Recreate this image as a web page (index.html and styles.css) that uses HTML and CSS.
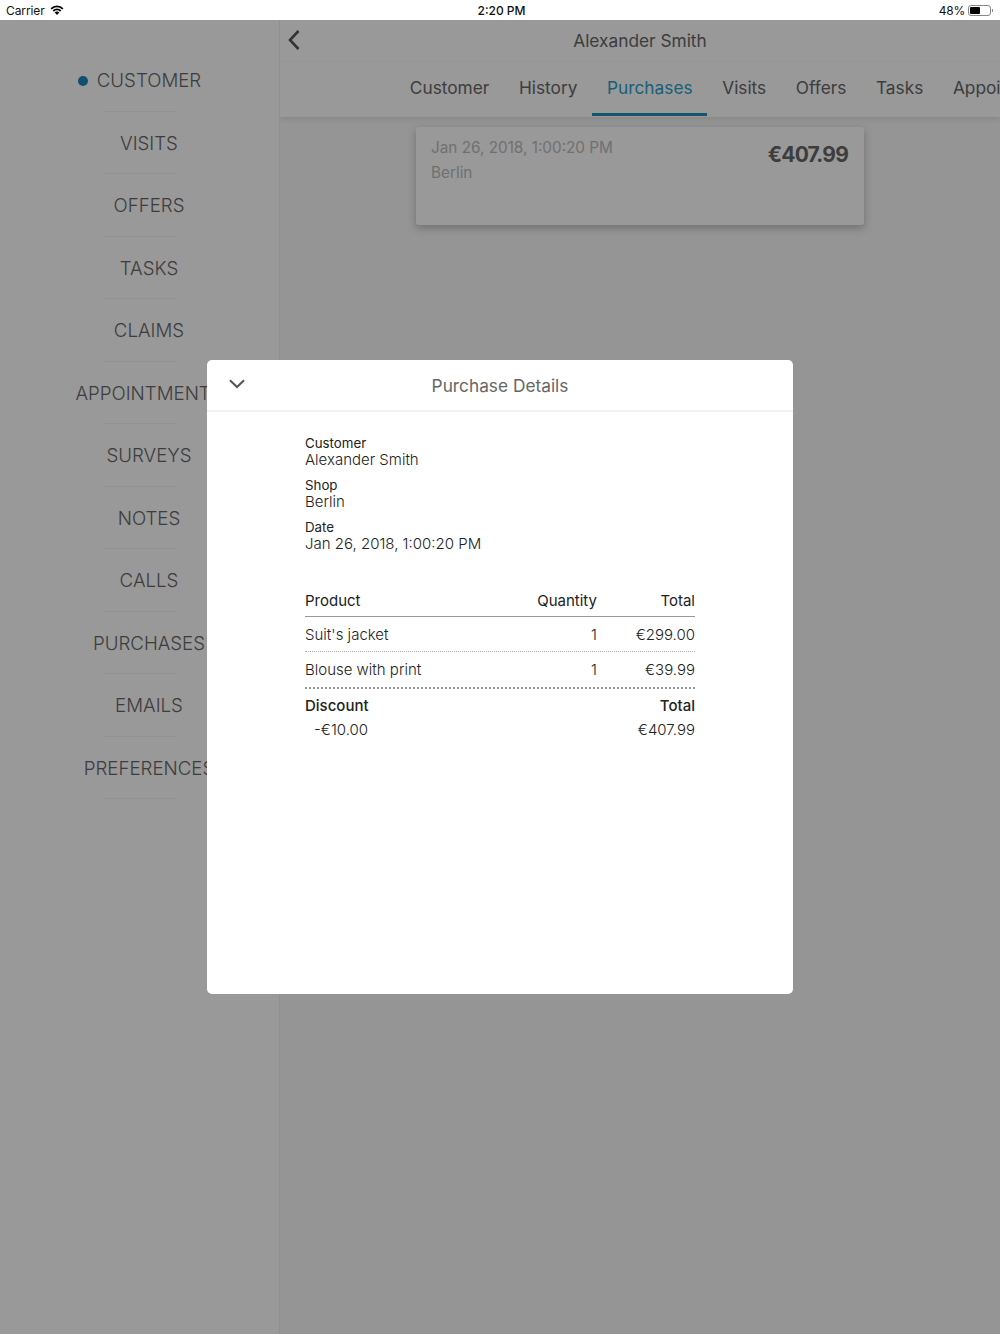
FILE: index.html
```html
<!DOCTYPE html>
<html lang="en">
<head>
<meta charset="utf-8">
<title>Purchase Details</title>
<link rel="stylesheet" href="styles.css">
</head>
<body>
<header class="status">
  <div class="status-left">
    <span>Carrier</span>
    <svg class="wifi" width="14" height="10" viewBox="0 0 14 10"><path d="M7 10 4.700 7.500a3.300 3.300 0 0 1 4.600 0Z" fill="#000"/><path d="M3.300 6a5.300 5.300 0 0 1 7.400 0M1.200 3.800a8.300 8.300 0 0 1 11.600 0" fill="none" stroke="#000" stroke-width="1.800"/></svg>
  </div>
  <div class="status-time">2:20 PM</div>
  <div class="status-right">
    <span class="status-pct">48%</span>
    <span class="battery"><span class="battery-level"></span></span>
    <span class="battery-cap"></span>
  </div>
</header>
<div class="app">
  <nav class="sidebar">
    <div class="side-item side-active"><span class="side-label">CUSTOMER</span></div>
    <div class="side-item"><span class="side-label">VISITS</span></div>
    <div class="side-item"><span class="side-label">OFFERS</span></div>
    <div class="side-item"><span class="side-label">TASKS</span></div>
    <div class="side-item"><span class="side-label">CLAIMS</span></div>
    <div class="side-item"><span class="side-label">APPOINTMENTS</span></div>
    <div class="side-item"><span class="side-label">SURVEYS</span></div>
    <div class="side-item"><span class="side-label">NOTES</span></div>
    <div class="side-item"><span class="side-label">CALLS</span></div>
    <div class="side-item"><span class="side-label">PURCHASES</span></div>
    <div class="side-item"><span class="side-label">EMAILS</span></div>
    <div class="side-item"><span class="side-label">PREFERENCES</span></div>
  </nav>
  <main class="main">
    <div class="topbar">
      <div class="titlebar">
        <svg class="back" width="14" height="22" viewBox="0 0 14 22"><path d="M11.500 2 3 11l8.500 9" fill="none" stroke="#555" stroke-width="2.600"/></svg>
        <span>Alexander Smith</span>
      </div>
      <div class="tabs">
        <span class="tab">Customer</span>
        <span class="tab">History</span>
        <span class="tab tab-active">Purchases</span>
        <span class="tab">Visits</span>
        <span class="tab">Offers</span>
        <span class="tab">Tasks</span>
        <span class="tab">Appointments</span>
      </div>
    </div>
    <article class="card">
      <div class="card-info">
        <div class="card-date">Jan 26, 2018, 1:00:20 PM</div>
        <div class="card-shop">Berlin</div>
      </div>
      <div class="card-price">€407.99</div>
    </article>
  </main>
</div>
<div class="scrim">
  <section class="modal">
    <div class="modal-head">
      <svg class="chevron" width="16" height="10" viewBox="0 0 16 10"><path d="M1 1.200 8 8l7-6.800" fill="none" stroke="#555" stroke-width="2"/></svg>
      <span>Purchase Details</span>
    </div>
    <div class="modal-body">
      <dl class="meta">
        <div class="meta-row"><dt>Customer</dt><dd>Alexander Smith</dd></div>
        <div class="meta-row"><dt>Shop</dt><dd>Berlin</dd></div>
        <div class="meta-row"><dt>Date</dt><dd>Jan 26, 2018, 1:00:20 PM</dd></div>
      </dl>
      <div class="table">
        <div class="row row-head"><span class="c-name">Product</span><span class="c-qty">Quantity</span><span class="c-total">Total</span></div>
        <div class="row row-item"><span class="c-name">Suit's jacket</span><span class="c-qty">1</span><span class="c-total">€299.00</span></div>
        <div class="row row-item row-last"><span class="c-name">Blouse with print</span><span class="c-qty">1</span><span class="c-total">€39.99</span></div>
      </div>
      <div class="summary">
        <div class="sum-col"><strong>Discount</strong><span class="sum-discount">-€10.00</span></div>
        <div class="sum-col sum-right"><strong>Total</strong><span>€407.99</span></div>
      </div>
    </div>
  </section>
</div>
</body>
</html>
```
FILE: styles.css
```css
* { box-sizing: border-box; }
html, body { margin: 0; height: 100%; }
body {
  position: relative;
  width: 1000px;
  height: 1334px;
  overflow: hidden;
  font-family: Inter, "Noto Sans", sans-serif;
  background: #fff;
  color: #333;
}
.status {
  height: 20px;
  background: #fff;
  color: #111;
  font-size: 12px;
  display: grid;
  grid-template-columns: 1fr auto 1fr;
  align-items: center;
  padding: 0 6px;
}
.status-left { display: flex; align-items: center; gap: 5px; letter-spacing: -.1px; }
.wifi { display: block; }
.status-time { font-weight: 500; padding-left: 3px; }
.status-right { display: flex; align-items: center; justify-content: flex-end; }
.status-pct { letter-spacing: -.2px; }
.battery {
  width: 23px;
  height: 11px;
  margin-left: 3px;
  padding: 1px;
  border: 1px solid #888;
  border-radius: 3px;
}
.battery-level { display: block; width: 10px; height: 100%; background: #000; border-radius: 1px; }
.battery-cap { width: 1px; height: 3px; margin-left: 1px; margin-right: 1px; background: #888; }
.app {
  display: grid;
  grid-template-columns: 280px 720px;
  height: 1314px;
}
.sidebar {
  background: #fff;
  border-right: 1px solid #eee;
  padding-top: 29.3px;
}
.side-item {
  height: 62.5px;
  display: flex;
  justify-content: center;
  align-items: center;
  position: relative;
  width: 298px;
  font-size: 18.700px;
  font-weight: 300;
  color: #666;
  white-space: nowrap;
}
.side-item::after {
  content: "";
  position: absolute;
  left: 103px;
  width: 74px;
  height: 1px;
  bottom: 0;
  background: #f4f4f4;
}
.side-label { position: relative; flex: none; }
.side-active .side-label::before {
  content: "";
  position: absolute;
  left: -19px;
  top: 50%;
  width: 10px;
  height: 10px;
  margin-top: -5px;
  border-radius: 50%;
  background: #1a85b8;
}
.main { background: #f8f8f8; overflow: hidden; min-width: 0; }
.topbar { background: #fff; height: 97px; box-shadow: 0 2px 6px rgba(0,0,0,.1); position: relative; }
.titlebar {
  height: 42px;
  position: relative;
  display: flex;
  justify-content: center;
  align-items: center;
  font-size: 17.300px;
  font-weight: 400;
  color: #666;
  border-bottom: 1px solid #fafafa;
}
.back { position: absolute; left: 7px; top: 9px; }
.tabs {
  display: flex;
  height: 55px;
  padding-left: 115px;
  white-space: nowrap;
  overflow: hidden;
}
.tab {
  flex: none;
  padding: 0 14.800px;
  height: 54px;
  line-height: 52px;
  font-size: 17.300px;
  color: #666;
}
.tab-active { color: #2a9fc9; border-bottom: 3px solid #1f8fb8; }
.card {
  width: 448px;
  height: 98px;
  margin: 10px 0 0 136px;
  background: #fff;
  border-radius: 3px;
  box-shadow: 0 3px 8px rgba(0,0,0,.25);
  padding: 11px 16px 11px 15px;
  display: flex;
  justify-content: space-between;
}
.card-date, .card-shop { font-size: 15.300px; font-weight: 400; color: #bbb; line-height: 20px; }
.card-shop { margin-top: 5px; }
.card-price { font-size: 21px; font-weight: 700; letter-spacing: -.8px; line-height: 32px; margin-top: 1px; color: #666; }
.scrim {
  position: absolute;
  left: 0;
  top: 20px;
  width: 1000px;
  height: 1314px;
  background: rgba(0,0,0,.4);
  display: flex;
  justify-content: center;
  align-items: center;
}
.modal { width: 586px; height: 634px; background: #fff; border-radius: 5px; overflow: hidden; }
.modal-head {
  height: 52px;
  border-bottom: 2px solid #f2f2f2;
  display: flex;
  justify-content: center;
  align-items: center;
  position: relative;
  font-size: 17.300px;
  color: #666;
}
.chevron { position: absolute; left: 22px; top: 19px; }
.modal-body { padding: 23px 98px 0; font-size: 15px; font-weight: 300; color: #222; }
.meta { margin: 0; }
.meta-row { margin-bottom: 8px; }
.meta-row dt { font-size: 13.300px; font-weight: 400; line-height: 16px; }
.meta-row dd { margin: 0; line-height: 18px; }
.table { margin-top: 32px; }
.row { display: grid; grid-template-columns: 1fr 100px 98px; align-items: center; }
.c-qty, .c-total { text-align: right; }
.row-head { height: 32px; font-weight: 400; border-bottom: 1px solid #999; }
.row-item { height: 35px; border-bottom: 1px dotted #aaa; }
.row-last { border-bottom: 2px dotted #999; height: 37px; }
.summary { display: flex; justify-content: space-between; padding-top: 7px; }
.sum-col { display: flex; flex-direction: column; gap: 4px; line-height: 20px; }
.sum-col strong { font-weight: 500; }
.sum-discount { padding-left: 9px; }
.sum-right { text-align: right; }
```
